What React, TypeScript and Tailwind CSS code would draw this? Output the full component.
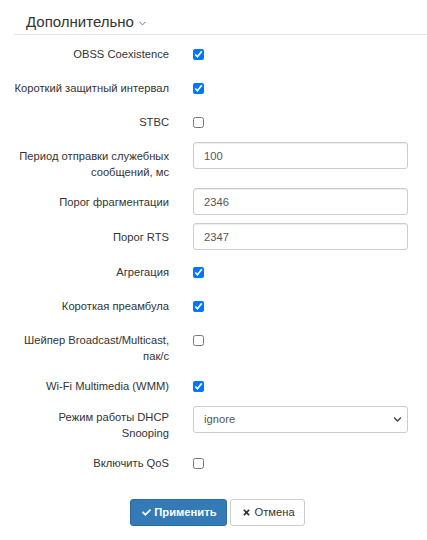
import { ChevronDown } from "lucide-react";
import { FaCheck, FaChevronDown, FaTimes } from "react-icons/fa";
import type { ReactNode } from "react";

type RowProps = {
  label: ReactNode;
  pt?: string;
  children: ReactNode;
};

function Row({ label, pt = "pt-[6px]", children }: RowProps) {
  return (
    <div className="mb-[8px] flex items-start">
      <div
        className={`w-[169px] shrink-0 whitespace-nowrap text-right text-[11.2px] leading-[16px] text-[#333] ${pt}`}
      >
        {label}
      </div>
      <div className="ml-[24px] w-[215px]">{children}</div>
    </div>
  );
}

function Check({ checked }: { checked?: boolean }) {
  return (
    <div className="flex h-[26px] items-start pt-[9px]">
      <input
        type="checkbox"
        defaultChecked={checked}
        className="h-[11px] w-[11px]"
      />
    </div>
  );
}

function TextInput({ value }: { value: string }) {
  return (
    <input
      type="text"
      defaultValue={value}
      className="h-[27px] w-full rounded-[3px] border border-[#ccc] px-[10px] text-[11.2px] text-[#555] shadow-[inset_0_1px_1px_rgba(0,0,0,0.075)] outline-none"
    />
  );
}

export default function App() {
  return (
    <main className="min-h-[540px] w-[427px] bg-white font-['Liberation_Sans',Arial,sans-serif]">
      <div className="ml-[14px] border-b border-[#e5e5e5] pb-[2px] pl-[12px] pt-[12px]">
        <div className="flex items-center text-[15px] leading-[20px] text-[#333]">
          Дополнительно
          <ChevronDown size={11} strokeWidth={1.8} className="ml-[3px] mt-[2px] text-[#555]" />
        </div>
      </div>

      <div className="mt-[5px]">
        <Row label="OBSS Coexistence">
          <Check checked />
        </Row>
        <Row label="Короткий защитный интервал">
          <Check checked />
        </Row>
        <Row label="STBC">
          <Check />
        </Row>
        <Row
          label={
            <>
              Период отправки служебных
              <br />
              сообщений, мс
            </>
          }
        >
          <TextInput value="100" />
        </Row>
        <Row label="Порог фрагментации">
          <TextInput value="2346" />
        </Row>
        <Row label="Порог RTS">
          <TextInput value="2347" />
        </Row>
        <Row label="Агрегация">
          <Check checked />
        </Row>
        <Row label="Короткая преамбула">
          <Check checked />
        </Row>
        <Row
          label={
            <>
              Шейпер Broadcast/Multicast,
              <br />
              пак/с
            </>
          }
        >
          <Check />
        </Row>
        <Row label="Wi-Fi Multimedia (WMM)">
          <Check checked />
        </Row>
        <Row
          pt="pt-[3px]"
          label={
            <>
              Режим работы DHCP
              <br />
              Snooping
            </>
          }
        >
          <div className="relative">
            <select
              defaultValue="ignore"
              className="h-[27px] w-full appearance-none rounded-[3px] border border-[#ccc] bg-white px-[10px] text-[11.2px] text-[#555] outline-none"
            >
              <option value="ignore">ignore</option>
              <option value="trust">trust</option>
            </select>
            <FaChevronDown
              size={9}
              className="pointer-events-none absolute right-[6px] top-[9px] text-[#444]"
            />
          </div>
        </Row>
        <Row label="Включить QoS">
          <Check />
        </Row>
      </div>

      <div className="mt-[24px] flex justify-center gap-[3px] pl-[8px]">
        <button className="flex h-[27px] items-center gap-[3px] rounded-[3px] border border-[#2e6da4] bg-[#337ab7] pl-[11px] pr-[9px] text-[11.2px] font-bold text-white">
          <FaCheck size={9} />
          Применить
        </button>
        <button className="flex h-[27px] items-center gap-[4px] rounded-[3px] border border-[#ccc] bg-white pl-[11px] pr-[9px] text-[11.2px] text-[#333]">
          <FaTimes size={9} />
          Отмена
        </button>
      </div>
    </main>
  );
}
